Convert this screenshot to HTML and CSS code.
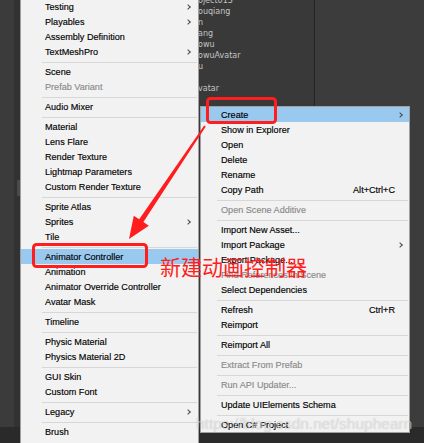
FILE: index.html
```html
<!DOCTYPE html>
<html lang="zh">
<head>
<meta charset="utf-8">
<title>Unity Create Menu</title>
<link rel="stylesheet" href="styles.css">
</head>
<body>
<div class="desk">
  <div class="desk-main">
    <div class="strip">
      <div class="strip-a"></div>
      <div class="strip-b"><div class="thumb"></div></div>
    </div>
    <div class="project">
      <div class="asset-list">
        <div>oject013</div>
        <div>ouqiang</div>
        <div>n</div>
        <div>ang</div>
        <div>owu</div>
        <div>owuAvatar</div>
        <div>u</div>
        <div>&nbsp;</div>
        <div>vatar</div>
      </div>
    </div>
    <div class="inspector"></div>
  </div>
  <div class="footer"></div>
</div>

<div class="menu menu-left">
  <div class="item has-sub"><span class="label">Testing</span><span class="sub"></span></div>
  <div class="item has-sub"><span class="label">Playables</span><span class="sub"></span></div>
  <div class="item"><span class="label">Assembly Definition</span></div>
  <div class="item has-sub"><span class="label">TextMeshPro</span><span class="sub"></span></div>
  <div class="sep"></div>
  <div class="item"><span class="label">Scene</span></div>
  <div class="item off"><span class="label">Prefab Variant</span></div>
  <div class="sep"></div>
  <div class="item"><span class="label">Audio Mixer</span></div>
  <div class="sep"></div>
  <div class="item"><span class="label">Material</span></div>
  <div class="item"><span class="label">Lens Flare</span></div>
  <div class="item"><span class="label">Render Texture</span></div>
  <div class="item"><span class="label">Lightmap Parameters</span></div>
  <div class="item"><span class="label">Custom Render Texture</span></div>
  <div class="sep"></div>
  <div class="item"><span class="label">Sprite Atlas</span></div>
  <div class="item has-sub"><span class="label">Sprites</span><span class="sub"></span></div>
  <div class="item"><span class="label">Tile</span></div>
  <div class="sep"></div>
  <div class="item hot"><span class="label">Animator Controller</span></div>
  <div class="item"><span class="label">Animation</span></div>
  <div class="item"><span class="label">Animator Override Controller</span></div>
  <div class="item"><span class="label">Avatar Mask</span></div>
  <div class="sep"></div>
  <div class="item"><span class="label">Timeline</span></div>
  <div class="sep"></div>
  <div class="item"><span class="label">Physic Material</span></div>
  <div class="item"><span class="label">Physics Material 2D</span></div>
  <div class="sep"></div>
  <div class="item"><span class="label">GUI Skin</span></div>
  <div class="item"><span class="label">Custom Font</span></div>
  <div class="sep"></div>
  <div class="item has-sub"><span class="label">Legacy</span><span class="sub"></span></div>
  <div class="sep"></div>
  <div class="item"><span class="label">Brush</span></div>
  <div class="item"><span class="label">Terrain Layer</span></div>
</div>

<div class="menu menu-right">
  <div class="item hot has-sub"><span class="label">Create</span><span class="sub"></span></div>
  <div class="item"><span class="label">Show in Explorer</span><span class="sub"></span></div>
  <div class="item"><span class="label">Open</span><span class="sub"></span></div>
  <div class="item"><span class="label">Delete</span><span class="sub"></span></div>
  <div class="item"><span class="label">Rename</span><span class="sub"></span></div>
  <div class="item"><span class="label">Copy Path</span><span class="key">Alt+Ctrl+C</span><span class="sub"></span></div>
  <div class="sep"></div>
  <div class="item off"><span class="label">Open Scene Additive</span><span class="sub"></span></div>
  <div class="sep"></div>
  <div class="item"><span class="label">Import New Asset...</span><span class="sub"></span></div>
  <div class="item has-sub"><span class="label">Import Package</span><span class="sub"></span></div>
  <div class="item"><span class="label">Export Package...</span><span class="sub"></span></div>
  <div class="item off"><span class="label">Find References In Scene</span><span class="sub"></span></div>
  <div class="item"><span class="label">Select Dependencies</span><span class="sub"></span></div>
  <div class="sep"></div>
  <div class="item"><span class="label">Refresh</span><span class="key">Ctrl+R</span><span class="sub"></span></div>
  <div class="item"><span class="label">Reimport</span><span class="sub"></span></div>
  <div class="sep"></div>
  <div class="item"><span class="label">Reimport All</span><span class="sub"></span></div>
  <div class="sep"></div>
  <div class="item off"><span class="label">Extract From Prefab</span><span class="sub"></span></div>
  <div class="sep"></div>
  <div class="item off"><span class="label">Run API Updater...</span><span class="sub"></span></div>
  <div class="sep"></div>
  <div class="item"><span class="label">Update UIElements Schema</span><span class="sub"></span></div>
  <div class="sep"></div>
  <div class="item"><span class="label">Open C# Project</span><span class="sub"></span></div>
</div>

<svg class="marks" width="424" height="443" viewBox="0 0 424 443" aria-hidden="true">
  <rect x="207.5" y="98.5" width="68" height="24" rx="3" fill="none" stroke="#ff1d1d" stroke-width="3"/>
  <rect x="33.5" y="244.5" width="113" height="22" rx="3" fill="none" stroke="#ff1d1d" stroke-width="3"/>
  <polygon fill="#ff1d1d" points="205.8,126.6 143.4,222.1 148.8,225.7 129,239 133.8,215.7 139.2,219.3 204.2,125.4"/>
</svg>

<div class="note">新建动画控制器</div>
<div class="watermark">https://blog.csdn.net/shuphearn</div>
</body>
</html>
```

FILE: styles.css
```css
* { box-sizing: border-box; }
html, body { margin: 0; padding: 0; }
body {
  width: 424px;
  height: 443px;
  overflow: hidden;
  position: relative;
  background: #3a3a3a;
  font-family: "Liberation Sans", Arial, sans-serif;
}

/* background editor */
.desk { display: flex; flex-direction: column; width: 424px; height: 443px; }
.desk-main { flex: 1; display: flex; min-height: 0; }
.strip { width: 20px; display: flex; }
.strip-a { width: 14px; background: #3b3b3b; }
.strip-b { width: 6px; background: #323232; }
.thumb { margin-top: 180px; height: 16px; margin-left: 3px; background: #4a4a4a; }
.project {
  width: 295px;
  background: #393939;
  border-right: 1px solid #242424;
  padding-left: 178px;
  overflow: hidden;
}
.asset-list {
  margin-top: -5px;
  font-family: "DejaVu Sans", sans-serif;
  font-size: 8px;
  line-height: 11px;
  color: #c4c4c4;
  white-space: nowrap;
}
.inspector { flex: 1; background: #3c3c3c; }
.footer { height: 16px; background: #2a2a2a; }

/* popup menus */
.menu {
  position: absolute;
  background: #f2f2f2;
  border: 1px solid #a0a0a0;
  color: #000;
  font-size: 9.1px;
  -webkit-text-stroke: 0.15px currentColor;
}
.menu-left { left: 20px; top: -2px; width: 179px; }
.menu-right { left: 200px; top: 106px; width: 210px; }

.item {
  height: 15px;
  display: flex;
  align-items: center;
  white-space: nowrap;
}
.menu-left .item { padding-left: 24px; padding-right: 3px; }
.menu-right .item { padding-left: 20px; padding-right: 2px; }
.label { flex: 1; }
.sub { width: 12px; height: 15px; display: flex; align-items: center; justify-content: center; }
.has-sub .sub::before {
  content: "";
  width: 3px;
  height: 3px;
  border-top: 1px solid #4a4a4a;
  border-right: 1px solid #4a4a4a;
  transform: translateX(-1px) rotate(45deg);
}
.item.off { color: #8a8a8a; }
.item.hot { background: #99c9ef; }

.sep { height: 5px; padding-top: 3px; }
.sep::before { content: ""; display: block; height: 1px; background: #d7d7d7; }
.menu-left .sep { margin-left: 21px; margin-right: 1px; }
.menu-right .sep { margin-left: 16px; margin-right: 1px; }

/* annotations */
.marks { position: absolute; left: 0; top: 0; pointer-events: none; }
.note {
  position: absolute;
  left: 160px;
  top: 256px;
  font-family: "Noto Sans CJK SC", sans-serif;
  font-size: 21px;
  line-height: 21px;
  color: #ff1d1d;
  white-space: nowrap;
}
.watermark {
  position: absolute;
  left: 196px;
  top: 416px;
  font-family: "Liberation Sans", Arial, sans-serif;
  font-size: 15.5px;
  line-height: 16px;
  color: rgba(255, 255, 255, 0.55);
  text-shadow: 0 0 1px rgba(0, 0, 0, 0.25);
  white-space: nowrap;
}
```
